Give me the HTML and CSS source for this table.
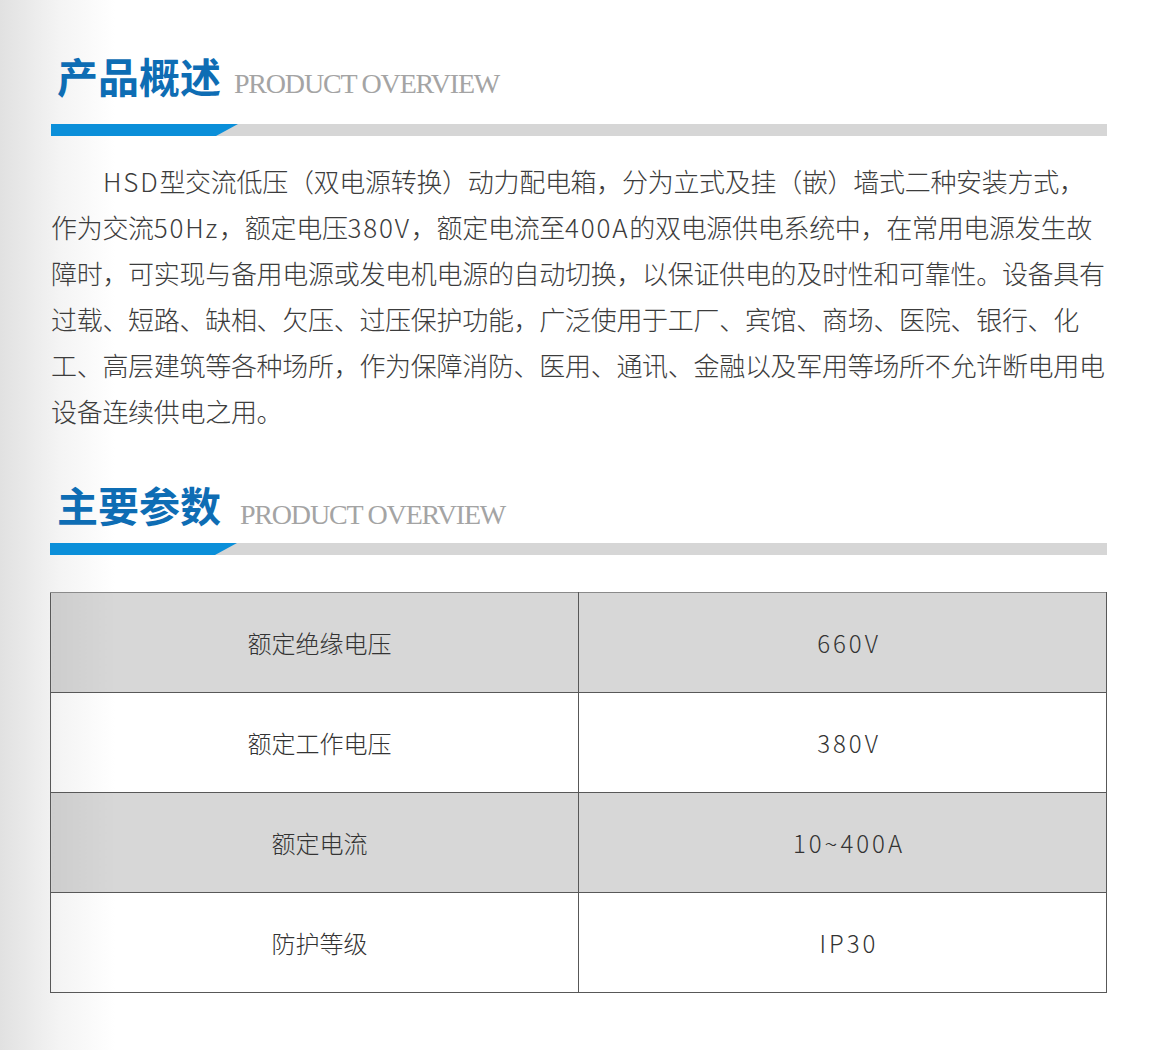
FILE: index.html
```html
<!DOCTYPE html>
<html lang="zh-CN">
<head>
<meta charset="utf-8">
<title>产品概述</title>
<link rel="stylesheet" href="styles.css">
</head>
<body>
<div class="page">
  <section class="section">
    <div class="sec-head">
      <h2 class="sec-title">产品概述</h2>
      <span class="sec-en">PRODUCT OVERVIEW</span>
    </div>
    <div class="bar"></div>
    <p class="intro"><span class="lat">HSD</span>型交流低压（双电源转换）动力配电箱，分为立式及挂（嵌）墙式二种安装方式，<br>作为交流<span class="lat">50Hz</span>，额定电压<span class="lat">380V</span>，额定电流至<span class="lat">400A</span>的双电源供电系统中，在常用电源发生故<br>障时，可实现与备用电源或发电机电源的自动切换，以保证供电的及时性和可靠性。设备具有<br>过载、短路、缺相、欠压、过压保护功能，广泛使用于工厂、宾馆、商场、医院、银行、化<br>工、高层建筑等各种场所，作为保障消防、医用、通讯、金融以及军用等场所不允许断电用电<br>设备连续供电之用。</p>
  </section>
  <section class="section section-params">
    <div class="sec-head sec-head-2">
      <h2 class="sec-title">主要参数</h2>
      <span class="sec-en">PRODUCT OVERVIEW</span>
    </div>
    <div class="bar bar-2"></div>
    <table class="params">
      <tr class="row-gray"><td class="k">额定绝缘电压</td><td class="v">660V</td></tr>
      <tr><td class="k">额定工作电压</td><td class="v">380V</td></tr>
      <tr class="row-gray"><td class="k">额定电流</td><td class="v">10~400A</td></tr>
      <tr><td class="k">防护等级</td><td class="v">IP30</td></tr>
    </table>
  </section>
</div>
</body>
</html>
```

FILE: styles.css
```css
html, body {
  margin: 0;
  padding: 0;
}
body {
  background: linear-gradient(to right, #e1e1e1 0, #f4f4f4 60px, #ffffff 115px);
  min-height: 1050px;
  font-family: "Noto Sans CJK SC", "Noto Sans", sans-serif;
  color: #3a3a3a;
}
.page {
  width: 1057px;
  padding: 50px 0 0 50px;
}
.sec-head {
  display: flex;
  align-items: baseline;
  gap: 13px;
  padding-left: 7px;
}
.sec-title {
  margin: 0;
  font-size: 41px;
  line-height: 50px;
  font-weight: 700;
  color: #0e6db4;
  letter-spacing: 0;
}
.sec-en {
  font-family: "Liberation Serif", "Times New Roman", serif;
  font-size: 28px;
  letter-spacing: -1.2px;
  color: #a4a4a4;
}
.bar {
  margin-top: 24px;
  height: 12px;
  background: #d6d6d6;
  margin-left: 1px;
}
.bar::before {
  content: "";
  display: block;
  width: 187px;
  height: 100%;
  background: #0b8fd9;
  clip-path: polygon(0 0, 100% 0, calc(100% - 22px) 100%, 0 100%);
}
.intro {
  margin: 22px 0 0 1px;
  font-size: 26px;
  line-height: 46px;
  font-weight: 300;
  text-indent: 2em;
  white-space: nowrap;
  letter-spacing: -0.3px;
  color: #3c3c3c;
}
.intro .lat {
  letter-spacing: 1.8px;
}
.section-params {
  margin-top: 45px;
}
.sec-head-2 {
  gap: 19px;
}
.sec-head-2 .sec-en {
  position: relative;
  top: 2px;
}
.bar-2 {
  margin-top: 14px;
  margin-left: 0;
  width: 1057px;
}
.params {
  margin-top: 37px;
  width: 1057px;
  border-collapse: collapse;
  table-layout: fixed;
}
.params td {
  height: 99px;
  border: 1px solid #585858;
  text-align: center;
  vertical-align: middle;
  font-size: 24px;
  font-weight: 300;
  color: #333;
  padding: 0 0 0 10px;
}
.params tr:first-child td {
  border-top-color: #8a8a8a;
}
.params .v {
  letter-spacing: 3px;
  padding-left: 13px;
}
.row-gray td {
  background: #d7d7d7;
}
.row-gray td.k {
  background: linear-gradient(to right, #cdcdcd 0, #d7d7d7 65px);
}
```
